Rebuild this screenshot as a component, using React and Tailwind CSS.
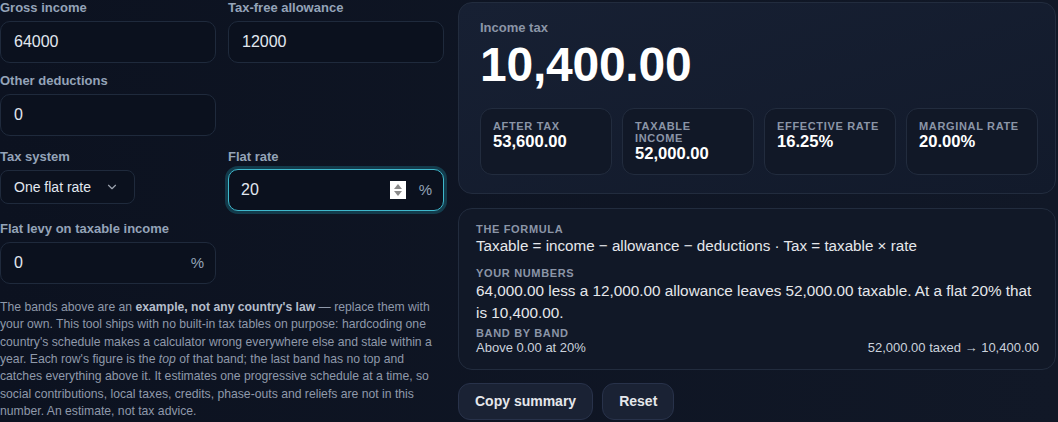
import { ChevronDown } from "lucide-react";

const stats = [
  { label: "After tax", value: "53,600.00" },
  { label: "Taxable income", value: "52,000.00" },
  { label: "Effective rate", value: "16.25%" },
  { label: "Marginal rate", value: "20.00%" },
];

function Label({ children }) {
  return (
    <div className="text-[13px] leading-4 font-bold text-[#94a3b8] mb-[5px]">
      {children}
    </div>
  );
}

function Field({ label, value, suffix }) {
  return (
    <div>
      <Label>{label}</Label>
      <div className="h-[42px] rounded-[10px] border border-[#1f2a3c] bg-[#0b111e] flex items-center pl-[13px] pr-[11px]">
        <span className="flex-1 text-[16px] text-[#e2e8f0]">{value}</span>
        {suffix && <span className="text-[15px] text-[#94a3b8]">{suffix}</span>}
      </div>
    </div>
  );
}

function Eyebrow({ children }) {
  return (
    <div className="text-[11px] leading-[14px] font-bold uppercase tracking-[0.06em] text-[#8b95a7]">
      {children}
    </div>
  );
}

export default function App() {
  return (
    <div
      className="w-[1058px] h-[422px] overflow-hidden bg-gradient-to-r from-[#0c1220] to-[#111827] text-[#e5e7eb]"
      style={{ fontFamily: '"Liberation Sans", Arial, sans-serif' }}
    >
      <div className="grid grid-cols-[444px_598px] gap-x-[14px]">
        {/* Inputs */}
        <div>
          <div className="grid grid-cols-2 gap-x-3 gap-y-[10px]">
            <Field label="Gross income" value="64000" />
            <Field label="Tax-free allowance" value="12000" />
            <Field label="Other deductions" value="0" />
            <div />
          </div>

          <div className="grid grid-cols-2 gap-x-3 mt-[13px]">
            <div>
              <Label>Tax system</Label>
              <div className="w-[135px] h-[34px] mt-px rounded-lg border border-[#1f2a3c] bg-[#0b111e] flex items-center justify-between pl-[13px] pr-[15px]">
                <span className="text-[14px] text-[#e2e8f0]">One flat rate</span>
                <ChevronDown size={14} strokeWidth={2} className="text-[#9ca3af]" />
              </div>
            </div>
            <div>
              <Label>Flat rate</Label>
              <div className="h-[42px] -mt-px rounded-[10px] border-[1.5px] border-[#3fb8cc] bg-[#0b111e] ring-[3px] ring-[#22b5cc]/25 flex items-center pl-[12px] pr-[11px]">
                <span className="flex-1 text-[16px] text-[#e2e8f0]">20</span>
                <div className="w-[16px] h-[18px] bg-white flex flex-col items-center justify-center gap-[2px] mr-[13px]">
                  <div className="w-0 h-0 border-l-[4px] border-r-[4px] border-b-[5px] border-l-transparent border-r-transparent border-b-[#8a8a8a]" />
                  <div className="w-0 h-0 border-l-[4px] border-r-[4px] border-t-[5px] border-l-transparent border-r-transparent border-t-[#8a8a8a]" />
                </div>
                <span className="text-[15px] text-[#94a3b8]">%</span>
              </div>
            </div>
          </div>

          <div className="grid grid-cols-2 gap-x-3 mt-[10px]">
            <Field label="Flat levy on taxable income" value="0" suffix="%" />
          </div>

          <p className="mt-[15px] text-[12.2px] leading-[17.35px] text-[#8f99aa]">
            The bands above are an{" "}
            <strong className="font-bold text-[#b4bdcb]">example, not any country's law</strong>{" "}
            — replace them with your own. This tool ships with no built-in tax tables on
            purpose: hardcoding one country's schedule makes a calculator wrong everywhere
            else and stale within a year. Each row's figure is the <em>top</em> of that band;
            the last band has no top and catches everything above it. It estimates one
            progressive schedule at a time, so social contributions, local taxes, credits,
            phase-outs and reliefs are not in this number. An estimate, not tax advice.
          </p>
        </div>

        {/* Results */}
        <div className="pt-[2px]">
          <section className="rounded-[14px] border border-[#222c3e] bg-gradient-to-br from-[#172033] to-[#121a2b] pt-[17px] pl-[21px] pr-[17px] pb-[18px]">
            <div className="text-[13px] leading-4 font-bold text-[#8b95a7]">Income tax</div>
            <div className="mt-[5px] text-[48px] leading-[48px] font-bold text-white tracking-[-0.005em]">
              10,400.00
            </div>
            <div className="mt-[19px] grid grid-cols-4 gap-[10px]">
              {stats.map((s) => (
                <div
                  key={s.label}
                  className="h-[67px] rounded-xl border border-[#222c3e] bg-[#111827] pt-[11px] px-3"
                >
                  <div className="text-[11px] leading-3 font-bold uppercase tracking-[0.06em] text-[#8b95a7]">
                    {s.label}
                  </div>
                  <div className="text-[16.6px] leading-5 font-bold text-white">{s.value}</div>
                </div>
              ))}
            </div>
          </section>

          <section className="mt-[14px] rounded-[14px] border border-[#222c3e] bg-[#111827] pt-[13px] pl-[17px] pr-[16px] pb-[13px]">
            <Eyebrow>The formula</Eyebrow>
            <div className="text-[15.2px] leading-5 text-[#e5e7eb]">
              Taxable = income − allowance − deductions · Tax = taxable × rate
            </div>
            <div className="mt-[10px]">
              <Eyebrow>Your numbers</Eyebrow>
            </div>
            <div className="text-[15.3px] leading-[22px] text-[#e5e7eb]">
              64,000.00 less a 12,000.00 allowance leaves 52,000.00 taxable. At a flat 20%
              that is 10,400.00.
            </div>
            <div className="mt-[2px]">
              <Eyebrow>Band by band</Eyebrow>
            </div>
            <div className="flex justify-between text-[13px] leading-4 text-[#cbd2dc]">
              <span>Above 0.00 at 20%</span>
              <span>52,000.00 taxed → 10,400.00</span>
            </div>
          </section>

          <div className="mt-[13px] flex gap-[9px]">
            <button className="h-[37px] px-4 rounded-xl border border-[#28324a] bg-[#1a2234] text-[14px] font-bold text-[#e5e7eb]">
              Copy summary
            </button>
            <button className="h-[37px] px-4 rounded-xl border border-[#28324a] bg-[#1a2234] text-[14px] font-bold text-[#e5e7eb]">
              Reset
            </button>
          </div>
        </div>
      </div>
    </div>
  );
}
